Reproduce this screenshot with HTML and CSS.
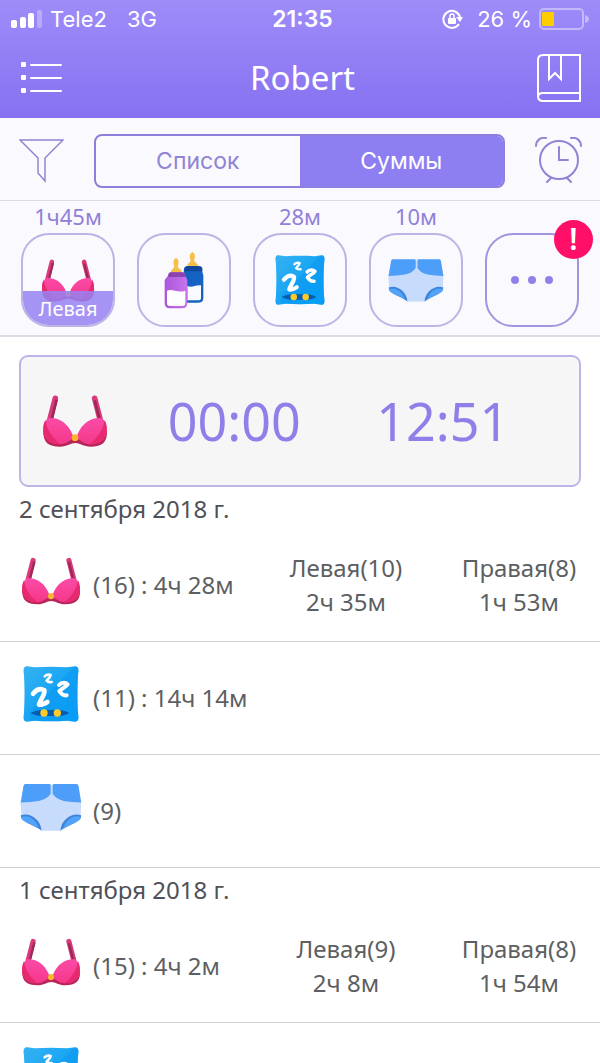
FILE: index.html
```html
<!DOCTYPE html>
<html lang="ru">
<head>
<meta charset="utf-8">
<meta name="viewport" content="width=device-width, initial-scale=1">
<title>Robert</title>
<link rel="stylesheet" href="styles.css">
</head>
<body>
<svg class="sprite" aria-hidden="true">
  <defs>
    <linearGradient id="cup" x1="0" y1="0" x2="0" y2="1"><stop offset="0" stop-color="#fb4ba6"/><stop offset="1" stop-color="#f5388b"/></linearGradient>
    <linearGradient id="pillowFill" x1="0" y1="0" x2="1" y2="1"><stop offset="0" stop-color="#36b2f2"/><stop offset=".5" stop-color="#18a5f4"/><stop offset="1" stop-color="#0aa5fa"/></linearGradient>
    <linearGradient id="milkPurple" x1="0" y1="0" x2="1" y2="0"><stop offset="0" stop-color="#a957dc"/><stop offset="1" stop-color="#c873ee"/></linearGradient>
    <symbol id="bra" viewBox="0 0 198 156">
      <path d="M40 10 24 72" stroke="#d83a7c" stroke-width="17" stroke-linecap="round"/>
      <path d="M44 14 30 70" stroke="#9f2858" stroke-width="8"/>
      <path d="M158 10 174 72" stroke="#d83a7c" stroke-width="17" stroke-linecap="round"/>
      <path d="M158 16 172 70" stroke="#9f2858" stroke-width="8"/>
      <path d="M4 108C3 143 20 155 54 155c22 0 32-11 46-11s24 11 46 11c34 0 50-12 49-47l-95 16z" fill="#b82558"/>
      <path d="M20 69c30-3 58 15 72 50l7 11c-13 1-23 18-47 18C18 148 0 127 4 97c2-15 7-22 16-28z" fill="url(#cup)"/>
      <path d="M178 69c-30-3-58 15-72 50l-7 11c13 1 23 18 47 18 34 0 52-21 48-51-2-15-7-22-16-28z" fill="url(#cup)"/>
      <path d="M10 76c5 30 20 50 44 72C18 148 0 127 4 97c1-10 3-17 6-21zM188 76c-5 30-20 50-44 72 36 0 54-21 50-51-1-10-3-17-6-21z" fill="#e72a6f"/>
      <circle cx="99" cy="128" r="10" fill="#fbb62c"/>
    </symbol>
    <symbol id="pillow" viewBox="0 0 168 168">
      <path d="M6 2c10-3 18 2 30 2 32-2 65-2 96 0 12 0 20-5 30-2 7 6 4 16 3 26-2 40-2 72 0 112 1 10 4 20-3 26-10 3-18-2-30-2-32 2-64 2-96 0-12 0-20 5-30 2-7-6-4-16-3-26 2-40 2-72 0-112C2 18-1 8 6 2z" fill="url(#pillowFill)"/>
      <path d="M150 6 20 138v24l16 2c32 2 64 2 96 0 12 0 20 5 30 2 7-6 4-16 3-26-2-40-2-72 0-112 1-10 4-20-3-26z" fill="#008cf0" opacity=".3"/>
      <path d="M23 141c17-11 38-9 59-9s40-2 57 9c-17 11-36 9-57 9s-42 2-59-9z" fill="#075cad"/>
      <circle cx="63" cy="141" r="11" fill="#ffcb28"/><circle cx="103" cy="141" r="11" fill="#ffcb28"/>
      <path d="M65 31c6-6 12-6 18-4-2 9-8 11-12 17 5 6 9 4 15 4" fill="none" stroke="#fff" stroke-width="8" stroke-linecap="round" stroke-linejoin="round"/>
      <path d="M108 57c8-9 20-8 26-2-5 9-18 12-25 20 6 10 13 14 22 13" fill="none" stroke="#fff" stroke-width="12" stroke-linecap="round" stroke-linejoin="round"/>
      <path d="M30 83c10-12 22-17 34-10 2 17-14 29-16 43 8 2 17-3 25-8" fill="none" stroke="#fff" stroke-width="14" stroke-linecap="round" stroke-linejoin="round"/>
    </symbol>
    <symbol id="diaper" viewBox="0 0 184 140">
      <path d="M12 2h160l10 53-2 39c0 20-31 28-57 45H65C38 122 4 115 4 94L1 55z" fill="#c7dcfc"/>
      <path d="M16 0h71q4 0 4 4v25C78 52 40 54 2 55L10 6q1-6 6-6zM168 0h-67q-4 0-4 4v25c13 23 47 25 85 26l-8-49q-1-6-6-6z" fill="#4d9ef9"/>
      <path d="M2 93c28-10 60 14 62 46C42 120 4 116 2 93zM182 93c-28-10-60 14-62 46 23-19 60-23 62-46z" fill="#3e83dc"/>
      <path d="M2 98c24-7 44 7 53 33C37 117 5 115 2 98zM182 98c-24-7-44 7-53 33 18-14 50-16 53-33z" fill="#52a4fb"/>
    </symbol>
    <symbol id="bottles" viewBox="0 0 120 174">
      <path d="M70 48v-7l10-11-2-8q-3-15 7-19 10 4 7 19l-2 8 12 11v7z" fill="#f8bf48"/>
      <path d="M59 63q0-17 12-17h32q12 0 12 17l3 10v68q0 14-14 14H66z" fill="#1463c2"/>
      <path d="M61 53q0-8 12-8h30q12 0 12 8v8H61z" fill="#12479b"/>
      <path d="M70 105c16 6 23-4 41-2v38q0 7-8 7H70z" fill="#f8faff"/>
      <path d="M21 66v-7l10-11-2-8q-3-15 7-19 10 4 7 19l-2 8 12 11v7z" fill="#f8bf48"/>
      <path d="M13 73q0-9 9-9h32q9 0 9 9l7 14v70q0 15-15 15H17q-15 0-15-15V87z" fill="url(#milkPurple)"/>
      <path d="M13 73q0-9 9-9h32q9 0 9 9v5H13z" fill="#8944ad"/>
      <path d="M9 119c18-7 30 8 55 0v37q0 9-9 9H18q-9 0-9-9z" fill="#fff"/>
    </symbol>
  </defs>
</svg>

<div class="app">
  <header class="top">
    <div class="status">
      <div class="status-left">
        <svg width="32" height="18" viewBox="0 0 32 18" fill="#fff" aria-hidden="true"><rect y="10" width="6" height="8" rx="2"/><rect x="9" y="7" width="6" height="11" rx="2"/><rect x="17" y="3" width="6" height="15" rx="2"/><rect x="26" width="5" height="18" rx="2" opacity=".3"/></svg>
        <span class="carrier">Tele2</span><span>3G</span>
      </div>
      <time class="clock">21:35</time>
      <div class="status-right">
        <svg width="22" height="20" viewBox="0 0 22 20" fill="none" stroke="#fff" stroke-width="2" aria-hidden="true"><path d="M17 15A8.500 8.500 0 1 1 18 8"/><path d="m14 8 7 0-3 5z" fill="#fff" stroke="none"/><rect x="6" y="9" width="8" height="6" rx="1" fill="#fff" stroke="none"/><path d="M8 9V7q0-2 2-2t2 2v2" stroke-width="1.500"/></svg>
        <span class="percent">26 %</span>
        <svg width="50" height="22" viewBox="0 0 50 22" aria-hidden="true"><rect x="1" y="1" width="43" height="20" rx="4" fill="none" stroke="#c3b8fb" stroke-width="2"/><rect x="3" y="4" width="12" height="14" rx="1" fill="#ffcc00"/><path d="M46 7q4 1 4 4t-4 4z" fill="#c3b8fb"/></svg>
      </div>
    </div>
    <div class="titlebar">
      <button class="icon-button" aria-label="Меню"><svg width="43" height="34" viewBox="0 0 43 34" fill="#fff"><rect x="1" y="1" width="5" height="5" rx="1"/><rect x="1" y="14" width="5" height="5" rx="1"/><rect x="1" y="27" width="5" height="5" rx="1"/><rect x="10" y="3" width="32" height="2" rx="1"/><rect x="10" y="16" width="32" height="2" rx="1"/><rect x="10" y="29" width="32" height="2" rx="1"/></svg></button>
      <h1 class="title">Robert</h1>
      <button class="icon-button" aria-label="Дневник"><svg width="44" height="48" viewBox="0 0 44 48" fill="none" stroke="#fff" stroke-width="2"><path d="M43 1H6Q1 1 1 6v36q0 5 5 5h37zM1 43q0-4 5-4h37M12 1v24l6-6 6 6V1"/></svg></button>
    </div>
  </header>

  <div class="toolbar">
    <button class="icon-button" aria-label="Фильтр"><svg width="45" height="44" viewBox="0 0 45 44" fill="none" stroke="#9084d4" stroke-width="1.500"><path d="M1 1h43L26 19v23l-7-8V19z"/></svg></button>
    <div class="segments">
      <button class="segment" aria-pressed="false">Список</button>
      <button class="segment segment-on" aria-pressed="true">Суммы</button>
    </div>
    <button class="icon-button" aria-label="Напоминания"><svg width="47" height="48" viewBox="0 0 47 48" fill="none" stroke="#9084d4" stroke-width="2" stroke-linecap="round"><circle cx="24" cy="23" r="19"/><path d="M24 10v13h9M16 41l-4 4M32 41l4 4M1 9C1 3 6 0 11 1M46 9c0-6-5-9-10-8"/></svg></button>
  </div>

  <nav class="actions">
    <div class="action"><span class="ago">1ч45м</span><button class="tile" aria-label="Кормление: левая"><svg class="i-bra"><use href="#bra"/></svg><span class="side">Левая</span></button></div>
    <div class="action"><span class="ago"></span><button class="tile" aria-label="Бутылочка"><svg class="i-bottles"><use href="#bottles"/></svg></button></div>
    <div class="action"><span class="ago">28м</span><button class="tile" aria-label="Сон"><svg class="i-pillow"><use href="#pillow"/></svg></button></div>
    <div class="action"><span class="ago">10м</span><button class="tile" aria-label="Подгузник"><svg class="i-diaper"><use href="#diaper"/></svg></button></div>
    <div class="action"><span class="ago"></span><button class="tile tile-more" aria-label="Ещё"><svg width="42" height="8" viewBox="0 0 42 8" fill="#9480eb"><circle cx="4" cy="4" r="4"/><circle cx="21" cy="4" r="4"/><circle cx="38" cy="4" r="4"/></svg></button><span class="badge">!</span></div>
  </nav>

  <main class="list">
    <div class="timer">
      <svg class="timer-icon" aria-hidden="true"><use href="#bra"/></svg>
      <span class="time">00:00</span>
      <span class="time">12:51</span>
    </div>
    <section>
      <h2 class="date">2 сентября 2018 г.</h2>
      <div class="row"><span class="row-icon"><svg class="row-bra" aria-hidden="true"><use href="#bra"/></svg></span><span>(16) : 4ч 28м</span><div class="parts"><span>Левая(10)<br>2ч 35м</span><span>Правая(8)<br>1ч 53м</span></div></div>
      <div class="row"><span class="row-icon"><svg class="row-pillow" aria-hidden="true"><use href="#pillow"/></svg></span><span>(11) : 14ч 14м</span></div>
      <div class="row"><span class="row-icon"><svg class="row-diaper" aria-hidden="true"><use href="#diaper"/></svg></span><span>(9)</span></div>
    </section>
    <section>
      <h2 class="date">1 сентября 2018 г.</h2>
      <div class="row"><span class="row-icon"><svg class="row-bra" aria-hidden="true"><use href="#bra"/></svg></span><span>(15) : 4ч 2м</span><div class="parts"><span>Левая(9)<br>2ч 8м</span><span>Правая(8)<br>1ч 54м</span></div></div>
      <div class="row"><span class="row-icon"><svg class="row-pillow" aria-hidden="true"><use href="#pillow"/></svg></span></div>
    </section>
  </main>
</div>
</body>
</html>
```
FILE: styles.css
```css
* { box-sizing: border-box; }

body {
  margin: 0;
  background: #fff;
  color: #5d5f62;
  font-family: "Noto Sans", "Open Sans", sans-serif;
  font-size: 24px;
}

button {
  margin: 0;
  padding: 0;
  border: 0;
  background: none;
  color: inherit;
  font: inherit;
  cursor: pointer;
}

svg { display: block; flex: none; }

.sprite { position: absolute; width: 0; height: 0; }

.app {
  display: flex;
  flex-direction: column;
  height: 100vh;
  overflow: hidden;
}

.top {
  flex: none;
  background: linear-gradient(#9e8cf9, #8771f1);
  color: #fff;
}

.status {
  display: grid;
  grid-template-columns: 1fr auto 1fr;
  align-items: center;
  height: 37px;
  padding: 0 11px;
  font-family: Inter, "Liberation Sans", sans-serif;
  font-size: 22px;
}

.status-left, .status-right { display: flex; align-items: center; }
.status-left { gap: 7px; }
.status-right { justify-content: flex-end; }
.carrier { margin-right: 13px; }
.clock { padding-left: 5px; font-size: 23px; font-weight: 600; }
.percent { margin: 0 7px 0 13px; }

.titlebar {
  display: flex;
  align-items: center;
  justify-content: space-between;
  height: 81px;
  padding: 0 19px 0 20px;
}

.icon-button { flex: none; }

.title {
  margin: 0;
  padding-left: 5px;
  font-size: 33px;
  font-weight: 400;
  line-height: 40px;
}

.toolbar {
  flex: none;
  display: flex;
  align-items: center;
  gap: 30px;
  height: 83px;
  padding: 3px 18px 0 19px;
  border-bottom: 1px solid #dedce4;
  background: #faf9fe;
}

.segments {
  flex: 1;
  display: flex;
  height: 54px;
  border: 2px solid #8c80dc;
  border-radius: 8px;
  overflow: hidden;
  color: #9084d4;
  font-family: Inter, "Liberation Sans", sans-serif;
  font-size: 23px;
}

.segment { flex: 1; }
.segment-on { background: #8d7ef2; color: #fff; }

.actions {
  flex: none;
  display: flex;
  justify-content: space-between;
  padding: 2px 21px 8px;
  border-bottom: 2px solid #dedce4;
  background: #faf9fe;
}

.action { position: relative; width: 94px; }

.ago {
  display: block;
  height: 30px;
  color: #9180d8;
  font-size: 22px;
  line-height: 26px;
  text-align: center;
}

.tile {
  position: relative;
  display: flex;
  align-items: center;
  justify-content: center;
  width: 94px;
  height: 94px;
  border: 2px solid #bdb3e5;
  border-radius: 28px;
  overflow: hidden;
}

.tile-more { border-color: #a395dc; }

.side {
  position: absolute;
  right: 0;
  bottom: 0;
  left: 0;
  height: 34px;
  background: rgba(150, 131, 243, .85);
  color: #fff;
  font-size: 20px;
  line-height: 36px;
}

.badge {
  position: absolute;
  top: 17px;
  right: -14px;
  width: 39px;
  height: 39px;
  border-radius: 50%;
  background: #ff0f68;
  color: #fff;
  font-size: 30px;
  font-weight: 600;
  line-height: 38px;
  text-align: center;
}

.i-bra { width: 54px; height: 43px; }
.i-bottles { width: 40px; height: 58px; }
.i-pillow { width: 50px; height: 50px; }
.i-diaper { width: 56px; height: 43px; }

.list { flex: 1; min-height: 0; overflow: hidden; }

.timer {
  display: grid;
  grid-template-columns: 88px 1fr 1fr;
  align-items: center;
  height: 132px;
  margin: 18px 19px 0;
  padding: 0 32px 0 21px;
  border: 2px solid #bdb5ea;
  border-radius: 9px;
  background: #f6f6f7;
  color: #8f80e9;
}

.timer-icon { width: 66px; height: 52px; }

.time {
  font-size: 52px;
  line-height: 60px;
  text-align: center;
}

.date {
  margin: 0;
  padding: 4px 19px 2px;
  color: #505058;
  font-size: 24px;
  font-weight: 400;
  line-height: 36px;
}

.row {
  display: grid;
  grid-template-columns: 62px 1fr auto;
  align-items: center;
  column-gap: 11px;
  height: 113px;
  padding: 0 21px 0 20px;
  border-bottom: 1px solid #cfcfd1;
  line-height: 34px;
}

.parts {
  display: grid;
  grid-template-columns: 120px 120px;
  column-gap: 53px;
  text-align: center;
  white-space: nowrap;
}

.row-icon {
  display: flex;
  justify-content: center;
  padding-bottom: 8px;
}

.row-bra { width: 60px; height: 48px; }
.row-pillow { width: 56px; height: 56px; }
.row-diaper { width: 62px; height: 47px; }
```
